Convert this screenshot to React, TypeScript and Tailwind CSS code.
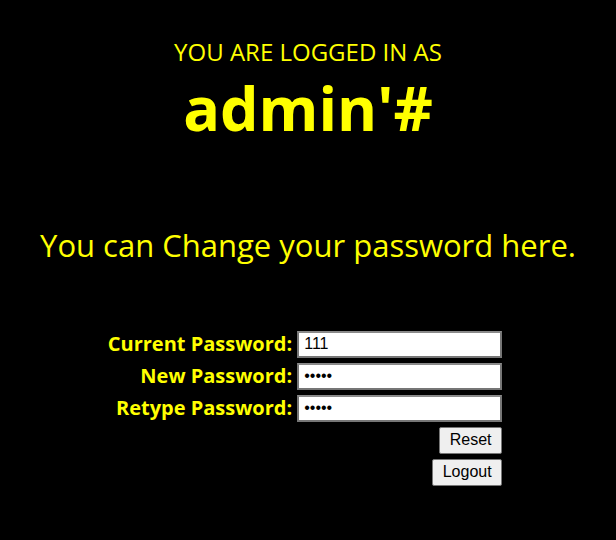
import React from "react";

const labelCls =
  "text-right font-bold text-[20px] leading-[32px] pr-[5px] text-[#ffff00] whitespace-nowrap";
const inputCls =
  "w-[205px] h-[27px] bg-white border-2 border-[#767676] border-t-[#8a8a8a] px-[5px] text-[16px] text-black outline-none";
const btnCls =
  "h-[27px] bg-[#efefef] border border-[#767676] rounded-[2px] text-[16px] text-black";
const inputFont = { fontFamily: "'Liberation Sans', Arial, sans-serif" };

const App: React.FC = () => {
  return (
    <div
      className="w-[616px] h-[540px] bg-black text-[#ffff00] flex flex-col items-center"
      style={{ fontFamily: "'Open Sans', 'Noto Sans', sans-serif" }}
    >
      <div className="mt-[37px] text-[24px] leading-[30px]">YOU ARE LOGGED IN AS</div>
      <div className="mt-[10px] text-[61px] leading-[62px] font-bold">admin'#</div>
      <div className="mt-[86px] text-[31px] leading-[40px]">
        You can Change your password here.
      </div>

      {/* form */}
      <table className="mt-[63px] mr-[6px] border-separate border-spacing-0">
        <tbody>
          <tr>
            <td className={labelCls}>Current Password:</td>
            <td className="align-middle">
              <input className={inputCls} style={inputFont} type="text" defaultValue="111" />
            </td>
          </tr>
          <tr>
            <td className={labelCls}>New Password:</td>
            <td className="align-middle">
              <input className={inputCls} style={inputFont} type="password" defaultValue="11111" />
            </td>
          </tr>
          <tr>
            <td className={labelCls}>Retype Password:</td>
            <td className="align-middle">
              <input className={inputCls} style={inputFont} type="password" defaultValue="11111" />
            </td>
          </tr>
          <tr>
            <td></td>
            <td className="text-right h-[32px] align-middle">
              <button className={`${btnCls} w-[63px]`} style={inputFont}>
                Reset
              </button>
            </td>
          </tr>
          <tr>
            <td></td>
            <td className="text-right h-[32px] align-middle">
              <button className={`${btnCls} w-[70px]`} style={inputFont}>
                Logout
              </button>
            </td>
          </tr>
        </tbody>
      </table>
    </div>
  );
};

export default App;
